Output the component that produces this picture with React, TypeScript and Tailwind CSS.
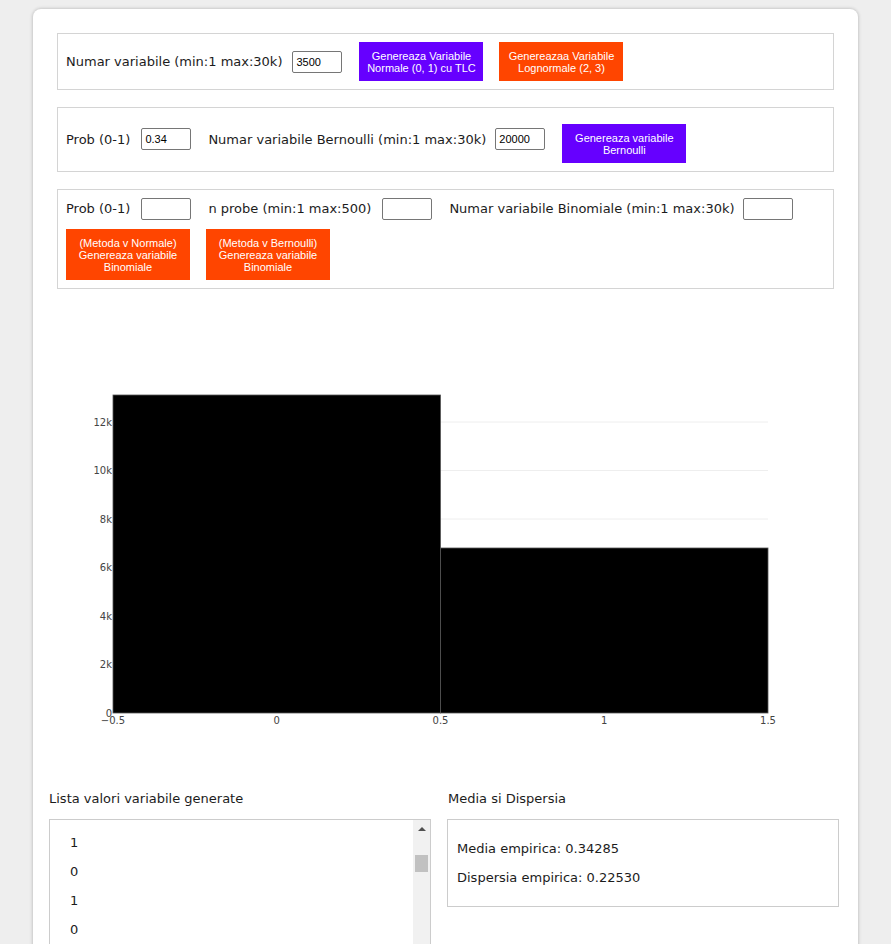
const label = "font-['DejaVu_Sans',Verdana,sans-serif] text-[13px] leading-[16px] text-[#1c1c1c] whitespace-nowrap";
const input =
  "w-[50px] h-[22px] shrink-0 border border-[#767676] rounded-[2px] bg-white px-[3px] font-['Liberation_Sans',Arial,sans-serif] text-[11px] text-black outline-none";
const btn =
  "w-[124px] shrink-0 flex items-center justify-center px-[6px] text-center font-['Liberation_Sans',Arial,sans-serif] text-[11px] leading-[12px] text-white";

function Chart() {
  const yTicks = [
    { v: "0", y: 424 },
    { v: "2k", y: 375.5 },
    { v: "4k", y: 327 },
    { v: "6k", y: 278.5 },
    { v: "8k", y: 230 },
    { v: "10k", y: 181.5 },
    { v: "12k", y: 133 },
  ];
  const xTicks = [
    { v: "\u22120.5", x: 80 },
    { v: "0", x: 243.75 },
    { v: "0.5", x: 407.5 },
    { v: "1", x: 571.25 },
    { v: "1.5", x: 735 },
  ];
  return (
    <svg width="825" height="490" className="block" fontFamily="'DejaVu Sans', Verdana, sans-serif">
      {yTicks.slice(1).map((t) => (
        <line key={t.v} x1="80" x2="735" y1={t.y} y2={t.y} stroke="#eeeeee" strokeWidth="1" />
      ))}
      <rect x="80" y="106" width="327.5" height="318" fill="#000" stroke="#555" strokeWidth="0.8" />
      <rect x="407.5" y="259" width="327.5" height="165" fill="#000" stroke="#555" strokeWidth="0.8" />
      {yTicks.map((t) => (
        <text key={t.v} x="79" y={t.y + 3.6} textAnchor="end" fontSize="10" fill="#444">
          {t.v}
        </text>
      ))}
      {xTicks.map((t) => (
        <text key={t.v} x={t.x} y="435" textAnchor="middle" fontSize="10" fill="#444">
          {t.v}
        </text>
      ))}
    </svg>
  );
}

export default function App() {
  return (
    <div className="min-h-[944px] bg-[#eeeeee] pt-[9px] overflow-hidden">
      <div className="mx-auto w-[825px] h-[1000px] rounded-[8px] bg-white shadow-[0_0_3px_1px_#c8c8c8]">
        <div className="px-[24px] pt-[24px]">
          {/* section 1 */}
          <div className="flex items-center border border-[#d4d4d4] px-[8px] py-[8px]">
            <span className={label}>Numar variabile (min:1 max:30k)</span>
            <input className={`${input} ml-[10px]`} defaultValue="3500" />
            <button className={`${btn} h-[39px] ml-[17px] bg-[#6600ff]`}>
              Genereaza Variabile
              <br />
              Normale (0, 1) cu TLC
            </button>
            <button className={`${btn} h-[39px] ml-[16px] bg-[#ff4500]`}>
              Genereazaa Variabile
              <br />
              Lognormale (2, 3)
            </button>
          </div>

          {/* section 2 */}
          <div className="mt-[17px] flex items-start border border-[#d4d4d4] px-[8px] pt-[16px] pb-[8px]">
            <span className={`${label} mt-[8px]`}>Prob (0-1)</span>
            <input className={`${input} ml-[11px] mt-[4px]`} defaultValue="0.34" />
            <span className={`${label} ml-[17px] mt-[8px]`}>Numar variabile Bernoulli (min:1 max:30k)</span>
            <input className={`${input} ml-[9px] mt-[4px]`} defaultValue="20000" />
            <button className={`${btn} h-[39px] ml-[17px] bg-[#6600ff]`}>
              Genereaza variabile
              <br />
              Bernoulli
            </button>
          </div>

          {/* section 3 */}
          <div className="mt-[17px] border border-[#d4d4d4] px-[8px] py-[8px]">
            <div className="flex items-center">
              <span className={label}>Prob (0-1)</span>
              <input className={`${input} ml-[11px]`} />
              <span className={`${label} ml-[17px]`}>n probe (min:1 max:500)</span>
              <input className={`${input} ml-[11px]`} />
              <span className={`${label} ml-[17px]`}>Numar variabile Binomiale (min:1 max:30k)</span>
              <input className={`${input} ml-[8px]`} />
            </div>
            <div className="mt-[9px] flex">
              <button className={`${btn} h-[51px] bg-[#ff4500]`}>
                (Metoda v Normale)
                <br />
                Genereaza variabile
                <br />
                Binomiale
              </button>
              <button className={`${btn} h-[51px] ml-[16px] bg-[#ff4500]`}>
                (Metoda v Bernoulli)
                <br />
                Genereaza variabile
                <br />
                Binomiale
              </button>
            </div>
          </div>
        </div>

        <Chart />

        <div className="flex px-[16px] pt-[12px]">
          <div className="w-[382px] shrink-0">
            <div className={label}>Lista valori variabile generate</div>
            <div className="mt-[12px] flex h-[200px] border border-[#cccccc]">
              <div className="flex-1 pl-[20px] pt-[15px]">
                {["1", "0", "1", "0"].map((v, i) => (
                  <div key={i} className={`${label} mb-[13px]`}>
                    {v}
                  </div>
                ))}
              </div>
              <div className="relative w-[17px] bg-[#f1f1f1]">
                <div className="mx-auto mt-[7px] h-0 w-0 border-x-[4px] border-b-[4px] border-x-transparent border-b-[#505050]" />
                <div className="mx-auto mt-[24px] h-[17px] w-[13px] bg-[#c1c1c1]" />
              </div>
            </div>
          </div>
          <div className="ml-[16px] w-[392px] shrink-0">
            <div className={`${label} pl-[1px]`}>Media si Dispersia</div>
            <div className="mt-[12px] border border-[#cccccc] px-[9px] pt-[21px] pb-[20px]">
              <div className={label}>Media empirica: 0.34285</div>
              <div className={`${label} mt-[13px]`}>Dispersia empirica: 0.22530</div>
            </div>
          </div>
        </div>
      </div>
    </div>
  );
}
